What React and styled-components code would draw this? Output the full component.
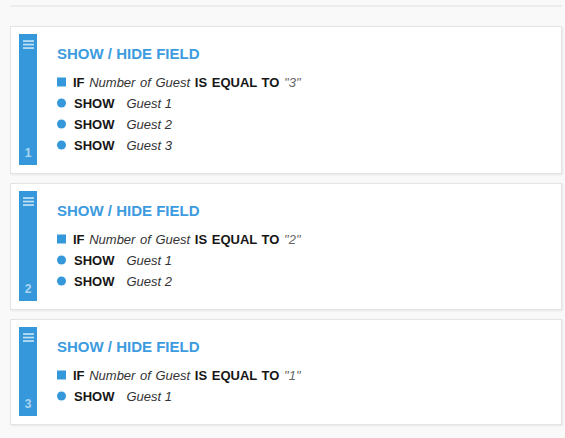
import React from 'react'
import styled, { createGlobalStyle } from 'styled-components'

const GlobalStyle = createGlobalStyle`
  body {
    margin: 0;
    background: #f9f9f9;
    font-family: "Liberation Sans", Arial, sans-serif;
  }
`

const rules = [
  { id: 1, value: '3', fields: ['Guest 1', 'Guest 2', 'Guest 3'] },
  { id: 2, value: '2', fields: ['Guest 1', 'Guest 2'] },
  { id: 3, value: '1', fields: ['Guest 1'] },
]

const MenuIcon = () => (
  <svg width="11" height="9" viewBox="0 0 11 9">
    <rect x="0" y="0.2" width="11" height="1.7" fill="rgba(255,255,255,0.7)" />
    <rect x="0" y="3.7" width="11" height="1.7" fill="rgba(255,255,255,0.7)" />
    <rect x="0" y="7.2" width="11" height="1.7" fill="rgba(255,255,255,0.7)" />
  </svg>
)

const RuleCard = ({ rule }) => (
  <Card>
    <Handle>
      <MenuIcon />
      <Index>{rule.id}</Index>
    </Handle>
    <Body>
      <Title>SHOW / HIDE FIELD</Title>
      <Row wide>
        <Bullet />
        <Keyword>IF</Keyword>&nbsp;
        <Field>Number of Guest</Field>&nbsp;
        <Keyword>IS EQUAL TO</Keyword>&nbsp;
        <Value>"{rule.value}"</Value>
      </Row>
      {rule.fields.map((f) => (
        <Row key={f}>
          <Bullet round />
          <Keyword>SHOW</Keyword>
          <Field spaced>{f}</Field>
        </Row>
      ))}
    </Body>
  </Card>
)

const App = () => {
  return (
    <Page>
      <GlobalStyle />
      <TopRule />
      <RuleList>
        {rules.map((r) => (
          <RuleCard key={r.id} rule={r} />
        ))}
      </RuleList>
    </Page>
  )
}

const Page = styled.div`
  padding: 5px 3px 0 10px;
`

const TopRule = styled.div`
  height: 2px;
  background: #ececec;
`

const RuleList = styled.div`
  padding-top: 19px;
`

const Card = styled.div`
  display: flex;
  background: #fff;
  border: 1px solid #e4e4e4;
  box-shadow: 1px 1px 2px rgba(0, 0, 0, 0.08);
  padding: 7px 8px 8px;
  margin-bottom: 9px;
`

const Handle = styled.div`
  width: 18px;
  flex-shrink: 0;
  background: #3498db;
  display: flex;
  flex-direction: column;
  align-items: center;
  justify-content: space-between;
  padding: 6px 0 6px;
  box-sizing: border-box;

  svg {
    display: block;
  }
`

const Index = styled.span`
  font-size: 12px;
  line-height: 12px;
  font-weight: bold;
  color: rgba(255, 255, 255, 0.6);
`

const Body = styled.div`
  padding: 11px 0 9px 20px;
`

const Title = styled.div`
  font-size: 15px;
  line-height: 18px;
  font-weight: bold;
  color: #3d9be0;
  margin-bottom: 9px;
`

const Row = styled.div`
  display: flex;
  align-items: center;
  font-size: 13px;
  line-height: 21px;
  white-space: pre;
  word-spacing: ${(p) => (p.wide ? '1px' : '0')};
`

const Bullet = styled.span`
  width: 9px;
  height: 9px;
  background: #3498db;
  border-radius: ${(p) => (p.round ? '50%' : '0')};
  margin-right: ${(p) => (p.round ? '8px' : '7px')};
  transform: translateY(-0.5px);
`

const Keyword = styled.span`
  font-weight: bold;
  color: #161616;
`

const Field = styled.span`
  font-style: italic;
  color: #333;
  margin-left: ${(p) => (p.spaced ? '12px' : '0')};
`

const Value = styled.span`
  font-style: italic;
  color: #666;
`

export default App
